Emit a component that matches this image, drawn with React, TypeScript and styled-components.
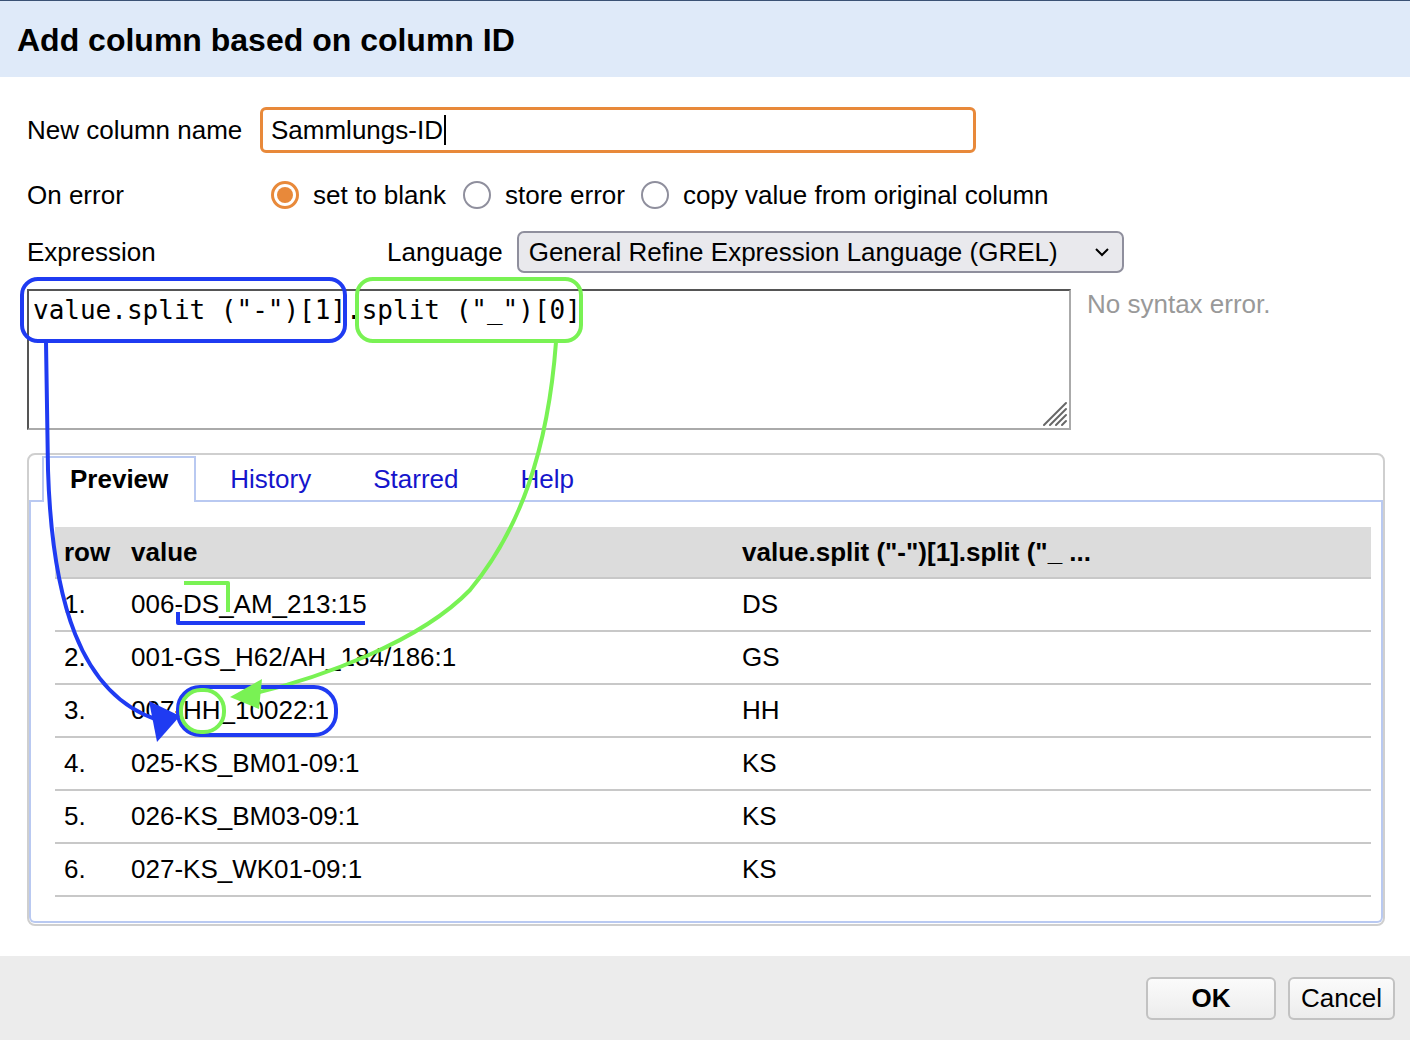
import React from "react";
import styled, { createGlobalStyle } from "styled-components";

const GlobalStyle = createGlobalStyle`
  html, body { margin: 0; padding: 0; background: #fff; }
  body { font-family: "Liberation Sans", Arial, sans-serif; color: #000; }
  * { box-sizing: border-box; }
`;

const Dialog = styled.div`
  position: relative;
  width: 1410px;
  height: 1040px;
  display: flex;
  flex-direction: column;
  overflow: hidden;
`;

const Header = styled.div`
  height: 77px;
  flex: none;
  background: #dfeaf9;
  border-top: 1px solid #3b5275;
  display: flex;
  align-items: center;
  padding-left: 17px;
  padding-top: 2px;
`;

const Title = styled.h1`
  margin: 0;
  font-size: 32px;
  font-weight: bold;
  font-family: "Liberation Sans", Arial, sans-serif;
`;

const Body = styled.div`
  flex: 1;
  padding: 30px 25px 0 27px;
  display: flex;
  flex-direction: column;
  font-size: 26px;
`;

const Row = styled.div<{ $mt?: number; $h: number }>`
  display: flex;
  align-items: center;
  height: ${(p) => p.$h}px;
  margin-top: ${(p) => p.$mt ?? 0}px;
`;

const Label = styled.div<{ $w: number }>`
  width: ${(p) => p.$w}px;
  flex: none;
`;

const TextField = styled.div`
  width: 716px;
  height: 46px;
  border: 3px solid #e8893a;
  border-radius: 6px;
  display: flex;
  align-items: center;
  padding-left: 8px;
`;

const Caret = styled.span`
  display: inline-block;
  width: 2px;
  height: 30px;
  background: #000;
  margin-left: 1px;
`;

const RadioOption = styled.label<{ $ml: number }>`
  display: flex;
  align-items: center;
  gap: 14px;
  margin-left: ${(p) => p.$ml}px;
`;

const RadioCircle = styled.span<{ $checked?: boolean }>`
  width: 28px;
  height: 28px;
  border-radius: 50%;
  flex: none;
  border: ${(p) => (p.$checked ? "3px solid #e8893a" : "2px solid #8f8f9d")};
  display: flex;
  align-items: center;
  justify-content: center;
  background: #fff;
  &::after {
    content: "";
    width: 16px;
    height: 16px;
    border-radius: 50%;
    background: ${(p) => (p.$checked ? "#e8893a" : "transparent")};
  }
`;

const SelectBox = styled.div`
  width: 607px;
  height: 42px;
  margin-left: 14px;
  background: #e9e9ed;
  border: 2px solid #8f8f9d;
  border-radius: 7px;
  display: flex;
  align-items: center;
  justify-content: space-between;
  padding: 0 12px 0 10px;
`;

const ExprRow = styled.div`
  display: flex;
  align-items: flex-start;
  margin-top: 16px;
`;

const ExprWrap = styled.div`
  position: relative;
  width: 1044px;
  height: 141px;
  flex: none;
`;

const ExprArea = styled.textarea`
  display: block;
  width: 100%;
  height: 100%;
  border: 2px solid;
  border-color: #555 #aaa #aaa #555;
  padding: 3px 4px;
  margin: 0;
  font-family: "DejaVu Sans Mono", "Liberation Mono", monospace;
  font-size: 26px;
  line-height: 32px;
  color: #000;
  resize: none;
  outline: none;
`;

const Grip = styled.svg`
  position: absolute;
  right: 3px;
  bottom: 3px;
`;

const SyntaxStatus = styled.div`
  margin-left: 16px;
  color: #999;
  line-height: 30px;
`;

const TabsBox = styled.div`
  margin-top: 23px;
  width: 1358px;
  height: 473px;
  border: 2px solid #cfcfcf;
  border-radius: 8px;
  padding: 1px 0 1px 0;
  display: flex;
  flex-direction: column;
`;

const TabStrip = styled.div`
  display: flex;
  align-items: flex-end;
  gap: 6px;
  height: 46px;
  padding-left: 13px;
  border-bottom: 2px solid #b9c9f1;
  flex: none;
`;

const Tab = styled.div<{ $active?: boolean }>`
  height: ${(p) => (p.$active ? "46px" : "44px")};
  margin-bottom: ${(p) => (p.$active ? "-2px" : "0")};
  padding: 0 26px;
  padding-bottom: ${(p) => (p.$active ? "2px" : "0")};
  display: flex;
  align-items: center;
  font-weight: ${(p) => (p.$active ? "bold" : "normal")};
  color: ${(p) => (p.$active ? "#000" : "#1515cc")};
  background: #fff;
  border: ${(p) => (p.$active ? "2px solid #b9c9f1" : "2px solid transparent")};
  border-bottom: none;
`;

const TabPanel = styled.div`
  flex: 1;
  border: 2px solid #b9c9f1;
  border-top: none;
  border-radius: 0 0 6px 6px;
  padding: 25px 10px 0 24px;
  overflow: hidden;
`;

const Table = styled.table`
  width: 1316px;
  border-collapse: collapse;
  font-size: 26px;
  table-layout: fixed;
`;

const HeadCell = styled.th<{ $w?: number }>`
  ${(p) => (p.$w ? `width: ${p.$w}px;` : "")}
  text-align: left;
  font-weight: bold;
  height: 51px;
  padding: 0 0 0 9px;
  background: #dcdcdc;
  border-bottom: 2px solid #c8c8c8;
  white-space: nowrap;
`;

const Cell = styled.td`
  height: 53px;
  padding: 0 0 0 9px;
  border-bottom: 2px solid #c8c8c8;
  white-space: nowrap;
`;

const Footer = styled.div`
  height: 84px;
  flex: none;
  background: #ececec;
  display: flex;
  align-items: center;
  justify-content: flex-end;
  gap: 12px;
  padding-right: 15px;
`;

const Button = styled.button<{ $w: number; $primary?: boolean }>`
  width: ${(p) => p.$w}px;
  height: 43px;
  border: 2px solid #c2c2c2;
  border-radius: 6px;
  background: linear-gradient(#fbfbfb, #ececec);
  font-family: "Liberation Sans", Arial, sans-serif;
  font-size: 26px;
  font-weight: ${(p) => (p.$primary ? "bold" : "normal")};
  color: #000;
  padding: 0;
`;

const Overlay = styled.svg`
  position: absolute;
  left: 0;
  top: 0;
  pointer-events: none;
`;

const rows = [
  ["1.", "006-DS_AM_213:15", "DS"],
  ["2.", "001-GS_H62/AH_184/186:1", "GS"],
  ["3.", "007-HH_10022:1", "HH"],
  ["4.", "025-KS_BM01-09:1", "KS"],
  ["5.", "026-KS_BM03-09:1", "KS"],
  ["6.", "027-KS_WK01-09:1", "KS"],
];

const BLUE = "#1f3bf2";
const GREEN = "#79f254";

export default function App() {
  return (
    <Dialog>
      <GlobalStyle />
      <Header>
        <Title>Add column based on column ID</Title>
      </Header>
      <Body>
        <Row $h={46}>
          <Label $w={233}>New column name</Label>
          <TextField>
            Sammlungs-ID<Caret />
          </TextField>
        </Row>
        <Row $h={40} $mt={22}>
          <Label $w={233}>On error</Label>
          <RadioOption $ml={11}>
            <RadioCircle $checked />
            set to blank
          </RadioOption>
          <RadioOption $ml={17}>
            <RadioCircle />
            store error
          </RadioOption>
          <RadioOption $ml={16}>
            <RadioCircle />
            copy value from original column
          </RadioOption>
        </Row>
        <Row $h={42} $mt={16}>
          <Label $w={360}>Expression</Label>
          <span>Language</span>
          <SelectBox>
            <span>General Refine Expression Language (GREL)</span>
            <svg width="16" height="10" viewBox="0 0 16 10">
              <path d="M2 2 L8 8 L14 2" fill="none" stroke="#000" strokeWidth="2" />
            </svg>
          </SelectBox>
        </Row>
        <ExprRow>
          <ExprWrap>
            <ExprArea readOnly defaultValue={'value.split ("-")[1].split ("_")[0]'} spellCheck={false} />
            <Grip width="26" height="26" viewBox="0 0 26 26">
              <g stroke="#666" strokeWidth="2" strokeLinecap="round">
                <line x1="2" y1="24" x2="24" y2="2" />
                <line x1="8" y1="24" x2="24" y2="8" />
                <line x1="14" y1="24" x2="24" y2="14" />
                <line x1="20" y1="24" x2="24" y2="20" />
              </g>
            </Grip>
          </ExprWrap>
          <SyntaxStatus>No syntax error.</SyntaxStatus>
        </ExprRow>
        <TabsBox>
          <TabStrip>
            <Tab $active>Preview</Tab>
            <Tab>History</Tab>
            <Tab>Starred</Tab>
            <Tab>Help</Tab>
          </TabStrip>
          <TabPanel>
            <Table>
              <thead>
                <tr>
                  <HeadCell $w={67}>row</HeadCell>
                  <HeadCell $w={611}>value</HeadCell>
                  <HeadCell>value.split ("-")[1].split ("_ ...</HeadCell>
                </tr>
              </thead>
              <tbody>
                {rows.map((r) => (
                  <tr key={r[0]}>
                    <Cell>{r[0]}</Cell>
                    <Cell>{r[1]}</Cell>
                    <Cell>{r[2]}</Cell>
                  </tr>
                ))}
              </tbody>
            </Table>
          </TabPanel>
        </TabsBox>
      </Body>
      <Footer>
        <Button $w={130} $primary>OK</Button>
        <Button $w={107}>Cancel</Button>
      </Footer>
      <Overlay width="1410" height="1040" viewBox="0 0 1410 1040">
        <g fill="none" strokeWidth="4" strokeLinecap="round" strokeLinejoin="round">
          <rect x="22" y="279" width="323" height="62" rx="16" stroke={BLUE} />
          <rect x="357" y="279" width="224" height="62" rx="16" stroke={GREEN} />
          <path d="M46 342 L48 470 C52 600 80 695 158 720" stroke={BLUE} />
          <path d="M556 342 C548 450 520 530 470 590 C420 642 320 678 252 694" stroke={GREEN} />
          <path d="M178 612 L178 623 L365 623" stroke={BLUE} strokeLinecap="butt" />
          <path d="M184 583 L228 583 L228 612" stroke={GREEN} strokeLinecap="butt" />
          <rect x="178" y="687" width="158" height="48" rx="22" stroke={BLUE} />
          <rect x="181" y="690" width="43" height="42" rx="20" stroke={GREEN} />
        </g>
        <polygon points="180,716 149,701 157,742" fill={BLUE} />
        <polygon points="230,697 262,679 259,709" fill={GREEN} />
      </Overlay>
    </Dialog>
  );
}
